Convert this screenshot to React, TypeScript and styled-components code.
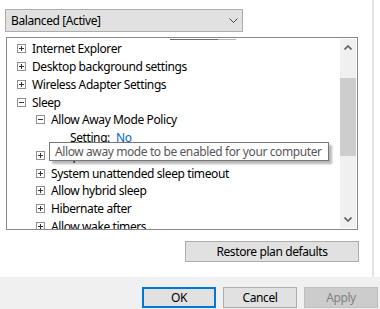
import React from 'react';
import styled, { createGlobalStyle } from 'styled-components';

const Global = createGlobalStyle`
  html, body { margin: 0; padding: 0; background: #fff; }
  body {
    font-family: "Noto Sans", "Open Sans", sans-serif;
    font-size: 12px;
    letter-spacing: -0.4px;
    color: #000;
  }
`;

const Window = styled.div`
  width: 380px;
  height: 309px;
  display: flex;
  flex-direction: column;
  overflow: hidden;
  background: #fff;
`;

const Page = styled.div`
  width: 374px;
  height: 277px;
  box-sizing: border-box;
  border-right: 2px solid #e3e3e3;
  padding: 9px 0 0 5px;
  display: flex;
  flex-direction: column;
`;

const Select = styled.div`
  width: 238px;
  height: 23px;
  box-sizing: border-box;
  border: 1px solid #adadad;
  background: #e1e1e1;
  display: flex;
  align-items: center;
  justify-content: space-between;
  padding: 0 4px 0 5px;
`;

const TreeBox = styled.div`
  margin: 5px 0 0 1px;
  width: 352px;
  height: 193px;
  box-sizing: border-box;
  border: 1px solid #828790;
  display: flex;
  background: #fff;
`;

const TreeArea = styled.div`
  flex: 1;
  position: relative;
  overflow: hidden;
`;

const HeaderRule = styled.div`
  margin: 1px 0 0 163px;
  width: 66px;
  height: 1px;
  background: linear-gradient(to right, #6d6d6d 0 48px, #b4b4b4 48px 66px);
`;

const Row = styled.div<{ $level: number }>`
  height: 17.75px;
  display: flex;
  align-items: center;
  padding-left: ${p => 10 + p.$level * 19}px;
  white-space: nowrap;
`;

const Expander = styled.span`
  width: 9px;
  height: 9px;
  box-sizing: border-box;
  border: 1px solid #919191;
  margin-right: 6px;
  display: inline-flex;
  align-items: center;
  justify-content: center;
  flex-shrink: 0;
`;

const Spacer = styled.span`
  width: 15px;
  flex-shrink: 0;
`;

const Value = styled.span`
  color: #0066cc;
  margin-left: 6px;
`;

const Tip = styled.div`
  position: absolute;
  left: 42px;
  top: 104px;
  width: 280px;
  height: 19px;
  box-sizing: border-box;
  border: 1px solid #767676;
  background: #fff;
  color: #575757;
  padding: 0 5px;
  display: flex;
  align-items: center;
  white-space: nowrap;
  box-shadow: 3px 3px 2px rgba(0, 0, 0, 0.28);
`;

const ScrollBar = styled.div`
  width: 16px;
  margin: 1px 1px 1px 0;
  background: #f0f0f0;
  display: flex;
  flex-direction: column;
`;

const Arrow = styled.div`
  height: 17px;
  display: flex;
  align-items: center;
  justify-content: center;
`;

const Track = styled.div<{ $grow?: number }>`
  flex: ${p => p.$grow ?? 1};
`;

const Thumb = styled.div`
  height: 78px;
  background: #cdcdcd;
`;

const Button = styled.div<{ $variant?: 'default' | 'disabled' }>`
  width: 74px;
  height: 21px;
  box-sizing: border-box;
  display: flex;
  align-items: center;
  justify-content: center;
  background: ${p => (p.$variant === 'disabled' ? '#cccccc' : '#e1e1e1')};
  color: ${p => (p.$variant === 'disabled' ? '#838383' : '#000')};
  border: ${p =>
    p.$variant === 'default' ? '2px solid #0078d7' : p.$variant === 'disabled' ? '1px solid #bfbfbf' : '1px solid #adadad'};
`;

const RestoreButton = styled(Button)`
  width: 174px;
  margin: 11px 0 0 180px;
`;

const Footer = styled.div`
  flex: 1;
  background: #f0f0f0;
  display: flex;
  justify-content: flex-end;
  align-items: flex-start;
  gap: 7px;
  padding: 10px 2px 0 0;
`;

const Box = ({ open }: { open?: boolean }) => (
  <Expander>
    <svg width="7" height="7" viewBox="0 0 7 7">
      <rect x="1" y="3" width="5" height="1" fill="#333" />
      {!open && <rect x="3" y="1" width="1" height="5" fill="#333" />}
    </svg>
  </Expander>
);

const Chevron = ({ up }: { up?: boolean }) => (
  <svg width="8" height="5" viewBox="0 0 8 5">
    <path d={up ? 'M0.5 4.5 L4 1 L7.5 4.5' : 'M0.5 0.5 L4 4 L7.5 0.5'} fill="none" stroke="#606060" strokeWidth="1.6" />
  </svg>
);

type Item = { label: string; level: number; open?: boolean; value?: string };

const items: Item[] = [
  { label: 'Internet Explorer', level: 0 },
  { label: 'Desktop background settings', level: 0 },
  { label: 'Wireless Adapter Settings', level: 0 },
  { label: 'Sleep', level: 0, open: true },
  { label: 'Allow Away Mode Policy', level: 1, open: true },
  { label: 'Setting:', level: 2, value: 'No' },
  { label: 'Sleep after', level: 1 },
  { label: 'System unattended sleep timeout', level: 1 },
  { label: 'Allow hybrid sleep', level: 1 },
  { label: 'Hibernate after', level: 1 },
  { label: 'Allow wake timers', level: 1 },
];

export default function App() {
  return (
    <>
      <Global />
      <Window>
        <Page>
          <Select>
            <span>Balanced [Active]</span>
            <svg width="9" height="5" viewBox="0 0 9 5">
              <path d="M0.5 0.5 L4.5 4.5 L8.5 0.5" fill="none" stroke="#444" strokeWidth="1" />
            </svg>
          </Select>
          <TreeBox>
            <TreeArea>
              <HeaderRule />
              {items.map(it => (
                <Row key={it.label} $level={it.level}>
                  {it.value ? <Spacer /> : <Box open={it.open} />}
                  <span>{it.label}</span>
                  {it.value && <Value>{it.value}</Value>}
                </Row>
              ))}
              <Tip>Allow away mode to be enabled for your computer</Tip>
            </TreeArea>
            <ScrollBar>
              <Arrow><Chevron up /></Arrow>
              <Track $grow={22} />
              <Thumb />
              <Track $grow={54} />
              <Arrow><Chevron /></Arrow>
            </ScrollBar>
          </TreeBox>
          <RestoreButton>Restore plan defaults</RestoreButton>
        </Page>
        <Footer>
          <Button $variant="default">OK</Button>
          <Button>Cancel</Button>
          <Button $variant="disabled">Apply</Button>
        </Footer>
      </Window>
    </>
  );
}
